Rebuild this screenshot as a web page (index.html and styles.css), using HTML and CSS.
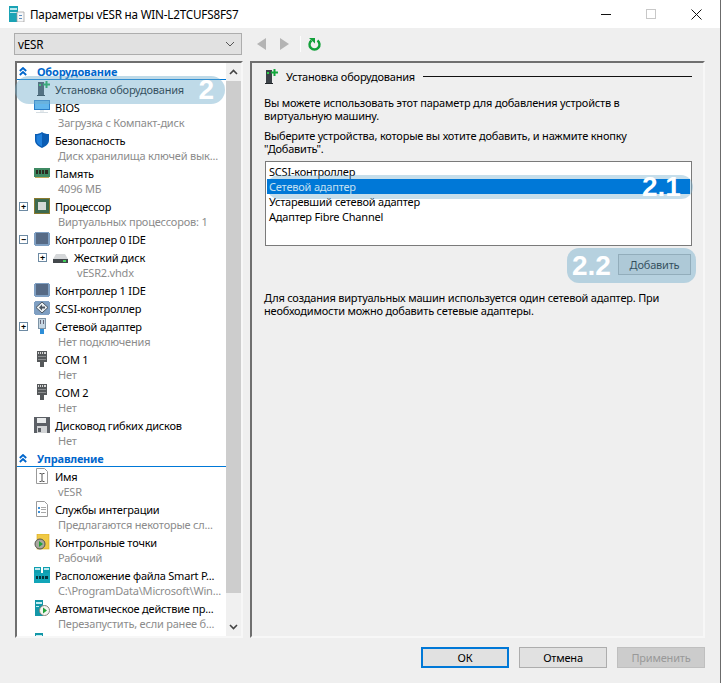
FILE: index.html
```html
<!DOCTYPE html>
<html lang="ru">
<head>
  <meta charset="UTF-8" />
  <title>Параметры vESR на WIN-L2TCUFS8FS7</title>
  <link rel="stylesheet" href="styles.css">
</head>
<body>
  <svg class="defs" width="0" height="0">
    <symbol id="i-chev" viewBox="0 0 8 9">
      <path d="M.8 4L4 1l3.200 3M.8 8L4 5l3.200 3" stroke="#0066cc" stroke-width="1.800" fill="none"/>
    </symbol>
    <symbol id="i-hw" viewBox="0 0 16 16">
      <rect x="4" y="1" width="6" height="13" fill="#3c4248"/>
      <rect x="5" y="3" width="2" height="2" fill="#2fd04a"/>
      <rect x="3" y="14" width="8" height="1" fill="#23282c"/>
      <path d="M9 2.500h2.500V0h2v2.500H16v2h-2.500V7h-2V4.500H9z" fill="#12a83c"/>
    </symbol>
    <symbol id="i-bios" viewBox="0 0 16 16">
      <rect x="0" y="1" width="16" height="10" fill="#2b7fc9"/>
      <rect x="1" y="2" width="14" height="8" fill="#63b7ec"/>
      <rect x="2" y="13" width="12" height="1" fill="#d5dde2"/>
      <rect x="6" y="11" width="4" height="2" fill="#e6ebee"/>
    </symbol>
    <symbol id="i-shield" viewBox="0 0 16 16">
      <path d="M8 0c2 1.500 4 2 7 2v6c0 4-3 6-7 8-4-2-7-4-7-8V2c3 0 5-.5 7-2z" fill="#0a5cb3"/>
      <path d="M8 1.500V14.500c-3-1.500-5.500-3-5.500-6.500V3.300c2 0 4-.6 5.500-1.800z" fill="#1f7fdc"/>
    </symbol>
    <symbol id="i-ram" viewBox="0 0 16 16">
      <rect x="0" y="3" width="16" height="9" fill="#3f8a63"/>
      <path d="M2 5h2v4H2zM5 5h2v4H5zM8 5h2v4H8zM11 5h3v4h-3z" fill="#2c2c22"/>
      <path d="M1 12h14v1H1z" fill="#c0a85a"/>
    </symbol>
    <symbol id="i-cpu" viewBox="0 0 16 16">
      <rect x="0" y="0" width="16" height="16" fill="#8a7a2f"/>
      <rect x="1" y="1" width="14" height="14" fill="#3d6a4f"/>
      <rect x="4" y="4" width="8" height="8" fill="#d6dad8"/>
    </symbol>
    <symbol id="i-ide" viewBox="0 0 16 16">
      <path d="M0 2h1V1h14v1h1v12h-1v1H1v-1H0z" fill="#7f9fc2"/>
      <rect x="2" y="2" width="12" height="11" fill="#566a85"/>
    </symbol>
    <symbol id="i-disk" viewBox="0 0 16 16">
      <path d="M3 5h9l3 5H0z" fill="#d5d7d9"/>
      <rect x="0" y="10" width="15" height="4" fill="#43484c"/>
      <rect x="10" y="11" width="3" height="2" fill="#3fd05a"/>
    </symbol>
    <symbol id="i-scsi" viewBox="0 0 16 16">
      <path d="M0 2h1V1h14v1h1v12h-1v1H1v-1H0z" fill="#7f9fc2"/>
      <path d="M8 2l6 5.500L8 13 2 7.500z" fill="#e8edf0" stroke="#4a5560"/>
      <path d="M5 7.500l3-3v2h3v2H8v2z" fill="#4a5560"/>
    </symbol>
    <symbol id="i-net" viewBox="0 0 16 16">
      <rect x="4.500" y=".5" width="7" height="10" fill="#c6d6e2" stroke="#7d93a5"/>
      <rect x="6" y="2" width="1" height="4" fill="#667"/>
      <rect x="9" y="2" width="1" height="4" fill="#667"/>
      <rect x="6" y="11" width="4" height="5" fill="#2d8ed8"/>
    </symbol>
    <symbol id="i-com" viewBox="0 0 16 16">
      <path d="M3 0h10v11h-3v5H6v-5H3z" fill="#55585a"/>
      <path d="M4 1h1v2H4zM6 1h1v2H6zM8 1h1v2H8zM10 1h2v2h-2z" fill="#d8d8d8"/>
      <path d="M4 5h8v1H4zM4 8h8v1H4z" fill="#8c8e90"/>
    </symbol>
    <symbol id="i-floppy" viewBox="0 0 16 16">
      <path d="M0 0h16v16H0z" fill="#5c6066"/>
      <rect x="3" y="1" width="9" height="5" fill="#e9ebec"/>
      <rect x="3" y="9" width="10" height="7" fill="#d2d4d6"/>
      <rect x="4" y="11" width="3" height="4" fill="#5c6066"/>
    </symbol>
    <symbol id="i-name" viewBox="0 0 16 16">
      <path d="M2.500.5h8l3 3v12h-11z" fill="#fff" stroke="#9a9a9a"/>
      <path d="M5.500 5.500H7l1 .8 1-.8h1.500M8 6.300v6.400M5.500 13.500H7l1-.8 1 .8h1.500" fill="none" stroke="#555"/>
    </symbol>
    <symbol id="i-integ" viewBox="0 0 16 16">
      <path d="M2.500.5h8l3 3v12h-11z" fill="#fff" stroke="#9a9a9a"/>
      <path d="M4 6h2v2H4zM4 10h2v2H4z" fill="#3c8fd8"/>
      <path d="M7 6h5v1H7zM7 8h5v1H7zM7 11h5v1H7z" fill="#a8a8a8"/>
    </symbol>
    <symbol id="i-check" viewBox="0 0 16 16">
      <rect x="3" y="0" width="12" height="15" fill="#f0c945" stroke="#d6a920" stroke-width=".6"/>
      <circle cx="6" cy="10" r="5" fill="#a9a9a0" stroke="#55554e"/>
      <path d="M5 7l4 3-4 3z" fill="#22a33a"/>
    </symbol>
    <symbol id="i-smart" viewBox="0 0 16 16">
      <path d="M0 0h7v6H0zM9 0h7v6H9z" fill="#0f9fb0"/>
      <path d="M1 1h5v2H1zM10 1h5v2h-5z" fill="#bfe8ee"/>
      <rect x="0" y="6" width="16" height="10" fill="#12a5b8"/>
      <path d="M2 9h2v3H2zM5 9h2v3H5zM8 9h2v3H8zM11 9h3v3h-3z" fill="#07333c"/>
    </symbol>
    <symbol id="i-auto" viewBox="0 0 16 16">
      <rect x="1" y="0" width="8" height="16" fill="#1397a8"/>
      <path d="M2 2h6v2H2zM2 6h3v1H2z" fill="#c6ecf1"/>
      <circle cx="10.500" cy="10.500" r="5" fill="#f4f4f0" stroke="#85857c"/>
      <path d="M9 7.500l4 3-4 3z" fill="#22a33a"/>
    </symbol>
  </svg>

  <div class="window">
    <header class="titlebar">
      <svg class="app-icon" width="16" height="16" viewBox="0 0 16 16">
        <path d="M0 0h9v16H0z" fill="#1aa3b5"/>
        <path d="M1 2h7v2H1zM1 6h7v1H1z" fill="#bde9ef"/>
        <path d="M8 6h7v10H8z" fill="#f7f8f9" stroke="#9a9a9a" stroke-width=".7"/>
        <path d="M10 9h3v1h-3zM10 12h3v1h-3z" fill="#5f8fc0"/>
      </svg>
      <span class="title">Параметры vESR на WIN-L2TCUFS8FS7</span>
      <div class="controls">
        <span class="ctl-min"></span>
        <span class="ctl-max"></span>
        <svg class="ctl-close" width="11" height="11" viewBox="0 0 11 11"><path d="M.5.500l10 10M10.500.500l-10 10" stroke="#111" fill="none"/></svg>
      </div>
    </header>

    <div class="toolbar">
      <div class="combo">
        <span>vESR</span>
        <svg width="10" height="6" viewBox="0 0 10 6"><path d="M1 1l4 4 4-4" stroke="#555" fill="none"/></svg>
      </div>
      <div class="nav">
        <svg width="9" height="12" viewBox="0 0 9 12"><path d="M9 0v12L0 6z" fill="#b4b4b4"/></svg>
        <svg width="9" height="12" viewBox="0 0 9 12"><path d="M0 0v12l9-6z" fill="#b4b4b4"/></svg>
        <span class="nav-sep"></span>
        <svg width="13" height="14" viewBox="0 0 13 14"><path d="M3.500 3.500a5 5 0 1 0 6 0" stroke="#12a03a" stroke-width="2.400" fill="none"/><path d="M1 1h6v5.500z" fill="#12a03a"/></svg>
      </div>
    </div>

    <main class="content">
      <div class="tree-panel">
        <div class="tree">
          <div class="group"><svg class="chev"><use href="#i-chev"/></svg>Оборудование</div>
          <div class="row"><span class="exp-slot"></span><svg class="ico"><use href="#i-hw"/></svg><span class="name">Установка оборудования</span></div>
          <div class="row"><span class="exp-slot"></span><svg class="ico"><use href="#i-bios"/></svg><span class="name">BIOS</span></div>
          <div class="sub">Загрузка с Компакт-диск</div>
          <div class="row"><span class="exp-slot"></span><svg class="ico"><use href="#i-shield"/></svg><span class="name">Безопасность</span></div>
          <div class="sub">Диск хранилища ключей вык...</div>
          <div class="row"><span class="exp-slot"></span><svg class="ico"><use href="#i-ram"/></svg><span class="name">Память</span></div>
          <div class="sub">4096 МБ</div>
          <div class="row"><span class="exp-slot"><span class="exp">+</span></span><svg class="ico"><use href="#i-cpu"/></svg><span class="name">Процессор</span></div>
          <div class="sub">Виртуальных процессоров: 1</div>
          <div class="row"><span class="exp-slot"><span class="exp">&minus;</span></span><svg class="ico"><use href="#i-ide"/></svg><span class="name">Контроллер 0 IDE</span></div>
          <div class="row nested"><span class="exp-slot"><span class="exp">+</span></span><svg class="ico"><use href="#i-disk"/></svg><span class="name">Жесткий диск</span></div>
          <div class="sub nested">vESR2.vhdx</div>
          <div class="row"><span class="exp-slot"></span><svg class="ico"><use href="#i-ide"/></svg><span class="name">Контроллер 1 IDE</span></div>
          <div class="row"><span class="exp-slot"></span><svg class="ico"><use href="#i-scsi"/></svg><span class="name">SCSI-контроллер</span></div>
          <div class="row"><span class="exp-slot"><span class="exp">+</span></span><svg class="ico"><use href="#i-net"/></svg><span class="name">Сетевой адаптер</span></div>
          <div class="sub">Нет подключения</div>
          <div class="row"><span class="exp-slot"></span><svg class="ico"><use href="#i-com"/></svg><span class="name">COM 1</span></div>
          <div class="sub">Нет</div>
          <div class="row"><span class="exp-slot"></span><svg class="ico"><use href="#i-com"/></svg><span class="name">COM 2</span></div>
          <div class="sub">Нет</div>
          <div class="row"><span class="exp-slot"></span><svg class="ico"><use href="#i-floppy"/></svg><span class="name">Дисковод гибких дисков</span></div>
          <div class="sub">Нет</div>
          <div class="group"><svg class="chev"><use href="#i-chev"/></svg>Управление</div>
          <div class="row"><span class="exp-slot"></span><svg class="ico"><use href="#i-name"/></svg><span class="name">Имя</span></div>
          <div class="sub">vESR</div>
          <div class="row"><span class="exp-slot"></span><svg class="ico"><use href="#i-integ"/></svg><span class="name">Службы интеграции</span></div>
          <div class="sub">Предлагаются некоторые сл...</div>
          <div class="row"><span class="exp-slot"></span><svg class="ico"><use href="#i-check"/></svg><span class="name">Контрольные точки</span></div>
          <div class="sub">Рабочий</div>
          <div class="row"><span class="exp-slot"></span><svg class="ico"><use href="#i-smart"/></svg><span class="name">Расположение файла Smart P...</span></div>
          <div class="sub">C:\ProgramData\Microsoft\Win...</div>
          <div class="row"><span class="exp-slot"></span><svg class="ico"><use href="#i-auto"/></svg><span class="name">Автоматическое действие пр...</span></div>
          <div class="sub">Перезапустить, если ранее б...</div>
          <div class="row"><span class="exp-slot"></span><svg class="ico"><use href="#i-auto"/></svg></div>
        </div>
        <div class="scrollbar">
          <svg class="arrow" width="9" height="6" viewBox="0 0 9 6"><path d="M1 5l3.500-3.500L8 5" stroke="#444" stroke-width="1.600" fill="none"/></svg>
          <div class="thumb"></div>
          <svg class="arrow" width="9" height="6" viewBox="0 0 9 6"><path d="M1 1l3.500 3.500L8 1" stroke="#444" stroke-width="1.600" fill="none"/></svg>
        </div>
      </div>

      <section class="detail">
        <div class="detail-head">
          <svg class="head-ico"><use href="#i-hw"/></svg>
          <span>Установка оборудования</span>
          <span class="head-line"></span>
        </div>
        <p>Вы можете использовать этот параметр для добавления устройств в<br>виртуальную машину.</p>
        <p class="spaced">Выберите устройства, которые вы хотите добавить, и нажмите кнопку<br>"Добавить".</p>
        <div class="listbox">
          <div class="item">SCSI-контроллер</div>
          <div class="item selected">Сетевой адаптер</div>
          <div class="item">Устаревший сетевой адаптер</div>
          <div class="item">Адаптер Fibre Channel</div>
        </div>
        <div class="add-row"><button class="btn add">Добавить</button></div>
        <p>Для создания виртуальных машин используется один сетевой адаптер. При<br>необходимости можно добавить сетевые адаптеры.</p>
      </section>
    </main>

    <footer class="actions">
      <button class="btn default">ОК</button>
      <button class="btn">Отмена</button>
      <button class="btn disabled">Применить</button>
    </footer>

    <div class="hint hint-tree">2</div>
    <div class="hint hint-item"></div>
    <div class="hint-num">2.1</div>
    <div class="hint hint-add">2.2</div>
  </div>
</body>
</html>
```

FILE: styles.css
```css
* {
  box-sizing: border-box;
}

html, body {
  margin: 0;
  padding: 0;
}

body {
  width: 722px;
  height: 683px;
  overflow: hidden;
  background: #fff;
  font-family: "Noto Sans", "Open Sans", sans-serif;
  font-size: 11px;
  letter-spacing: -0.2px;
  color: #000;
}

.defs {
  position: absolute;
}

.window {
  position: relative;
  width: 721px;
  height: 683px;
  background: #efefef;
  border-right: 1px solid #6b6b6b;
}

/* title bar */
.titlebar {
  display: flex;
  align-items: center;
  height: 28px;
  padding-left: 9px;
  background: #fff;
}

.title {
  margin-left: 5px;
  font-size: 11.7px;
}

.controls {
  display: flex;
  align-items: center;
  margin-left: auto;
  padding-right: 18px;
}

.ctl-min {
  width: 10px;
  height: 1px;
  background: #111;
}

.ctl-max {
  width: 10px;
  height: 10px;
  margin-left: 35px;
  border: 1px solid #c8c8c8;
}

.ctl-close {
  margin-left: 35px;
}

/* combo and nav */
.toolbar {
  display: flex;
  align-items: center;
  height: 33px;
  padding: 5px 0 6px 14px;
}

.combo {
  display: flex;
  align-items: center;
  justify-content: space-between;
  width: 228px;
  height: 22px;
  padding: 0 6px 0 3px;
  background: #e1e1e1;
  border: 1px solid #adadad;
  font-size: 11.7px;
}

.nav {
  display: flex;
  align-items: center;
  margin-left: 15px;
}

.nav svg + svg {
  margin-left: 14px;
}

.nav-sep {
  width: 1px;
  height: 16px;
  margin: 0 7px 0 11px;
  background: #fdfdfd;
}

/* main area */
.content {
  display: flex;
  height: 577px;
  padding-left: 15px;
}

.tree-panel {
  display: flex;
  width: 228px;
  height: 100%;
  background: #fff;
  border-top: 2px solid #6f6f6f;
  border-left: 2px solid #6f6f6f;
  border-right: 2px solid #f7f7f7;
  border-bottom: 2px solid #f7f7f7;
}

.tree {
  flex: 1;
  min-width: 0;
  overflow: hidden;
}

.group {
  display: flex;
  align-items: center;
  height: 18px;
  padding-top: 2px;
  border-bottom: 1px solid #0078d7;
  color: #0066cc;
  font-weight: 700;
}

.tree > .group:first-child {
  height: 17px;
  padding-top: 1px;
}

.chev {
  width: 8px;
  height: 9px;
  margin: 0 10px 0 2px;
}

.row {
  display: flex;
  align-items: center;
  height: 18px;
  white-space: nowrap;
}

.row.nested {
  padding-left: 19px;
}

.exp-slot {
  display: flex;
  align-items: center;
  width: 17px;
  padding-left: 2px;
}

.exp {
  display: flex;
  align-items: center;
  justify-content: center;
  width: 9px;
  height: 9px;
  border: 1px solid #6d8aa3;
  background: #fff;
  font-size: 9px;
  font-weight: 700;
  line-height: 1;
  letter-spacing: 0;
}

.ico {
  width: 16px;
  height: 16px;
  margin-right: 5px;
}

.sub {
  height: 15px;
  padding-left: 41px;
  color: #8c8c8c;
  line-height: 13px;
  white-space: nowrap;
}

.sub.nested {
  padding-left: 60px;
}

.scrollbar {
  display: flex;
  flex: none;
  flex-direction: column;
  align-items: center;
  width: 15px;
  background: #f0f0f0;
}

.arrow {
  flex: none;
  margin: 6px 0;
}

.thumb {
  align-self: stretch;
  height: 512px;
  margin-bottom: auto;
  background: #cdcdcd;
}

/* right panel */
.detail {
  width: 455px;
  height: 100%;
  margin-left: 7px;
  padding: 0 11px 0 12px;
  border-top: 2px solid #6f6f6f;
  border-left: 2px solid #6f6f6f;
  border-right: 2px solid #f7f7f7;
  border-bottom: 2px solid #f7f7f7;
}

.detail-head {
  display: flex;
  align-items: center;
  height: 27px;
  white-space: nowrap;
}

.head-ico {
  width: 16px;
  height: 16px;
  margin: 0 8px 0 -2px;
}

.head-line {
  flex: 1;
  height: 1px;
  margin-left: 8px;
  background: #111;
}

.detail p {
  margin: 6px 0 0;
  line-height: 13px;
  white-space: nowrap;
}

.detail p.spaced {
  margin-top: 7px;
}

.listbox {
  height: 85px;
  margin: 6px 0 0 1px;
  padding: 2px 1px;
  background: #fff;
  border: 1px solid #7a7a7a;
}

.item {
  height: 15px;
  padding-left: 2px;
  line-height: 15px;
}

/* the selected row stays above its callout, only its text takes the tint */
.item.selected {
  position: relative;
  z-index: 2;
  background: #0078d7;
  color: #c4e0f2;
}

.add-row {
  display: flex;
  justify-content: flex-end;
  margin-top: 8px;
  padding-right: 1px;
}

/* buttons */
.btn {
  width: 88px;
  height: 21px;
  padding: 0;
  background: #e1e1e1;
  border: 1px solid #adadad;
  font: inherit;
  letter-spacing: inherit;
  color: #000;
}

.add {
  width: 73px;
}

.add-row + p {
  margin-top: 16px;
}

.default {
  border: 2px solid #0078d7;
}

.disabled {
  background: #ccc;
  border-color: #bfbfbf;
  color: #999;
}

.actions {
  display: flex;
  justify-content: flex-end;
  gap: 10px;
  padding: 9px 15px 0 0;
}

/* numbered callouts drawn over the screenshot */
.hint {
  position: absolute;
  display: flex;
  align-items: center;
  justify-content: flex-end;
  background: rgba(112, 172, 205, 0.45);
  color: #fff;
  font-family: "Liberation Sans", sans-serif;
  font-weight: 700;
  font-size: 28px;
  letter-spacing: 0;
}

.hint-tree {
  left: 15px;
  top: 76px;
  width: 210px;
  height: 28px;
  padding-right: 11px;
  border-radius: 14px;
}

.hint-item {
  z-index: 1;
  left: 267px;
  top: 175px;
  width: 426px;
  height: 24px;
  border-radius: 12px;
  background: rgba(112, 172, 205, 0.4);
}

.hint-num {
  position: absolute;
  z-index: 3;
  left: 642px;
  top: 171px;
  color: #fff;
  font-family: "Liberation Sans", sans-serif;
  font-weight: 700;
  font-size: 28px;
  line-height: 32px;
  letter-spacing: 0;
}

.hint-add {
  left: 567px;
  top: 248px;
  width: 129px;
  height: 35px;
  justify-content: flex-start;
  padding-left: 5px;
  border-radius: 12px;
}
```
